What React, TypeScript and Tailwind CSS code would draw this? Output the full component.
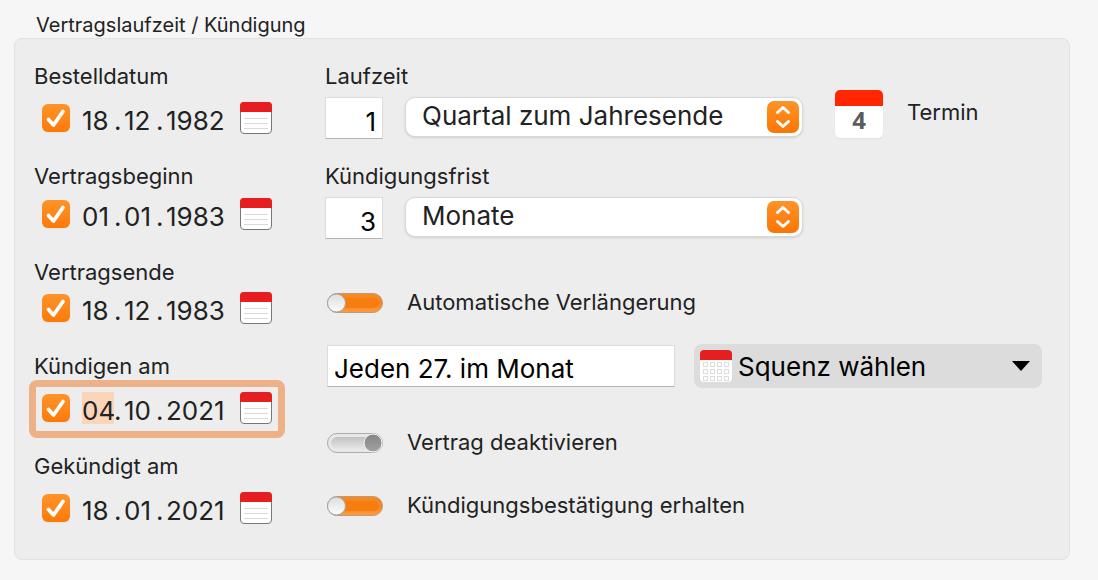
import { useState } from "react";
import clsx from "clsx";

interface DateEntry {
  id: string;
  label: string;
  day: string;
  month: string;
  year: string;
  gap: string;
  active?: boolean;
}

const dates: DateEntry[] = [
  { id: "order", label: "Bestelldatum", day: "18", month: "12", year: "1982", gap: "gap-1.5" },
  { id: "start", label: "Vertragsbeginn", day: "01", month: "01", year: "1983", gap: "gap-0.5" },
  { id: "end", label: "Vertragsende", day: "18", month: "12", year: "1983", gap: "gap-0" },
  { id: "cancel", label: "Kündigen am", day: "04", month: "10", year: "2021", gap: "gap-1.5", active: true },
  { id: "cancelled", label: "Gekündigt am", day: "18", month: "01", year: "2021", gap: "gap-1.5" },
];

function CalendarIcon() {
  return (
    <svg viewBox="0 0 32 32" className="size-8" aria-hidden="true">
      <rect x="0.5" y="0.5" width="31" height="31" rx="3.5" fill="#fff" stroke="#777" />
      <path d="M0 10V4a4 4 0 0 1 4-4h24a4 4 0 0 1 4 4v6z" fill="#e61e20" />
      <path d="M4 16.5h24M4 21.5h24M4 26.5h24" stroke="#d9d9de" />
    </svg>
  );
}

function MonthIcon() {
  return (
    <svg viewBox="0 0 32 32" className="size-8 shrink-0" aria-hidden="true">
      <rect width="32" height="32" rx="4" fill="#fff" />
      <path d="M0 10V4a4 4 0 0 1 4-4h24a4 4 0 0 1 4 4v6z" fill="#e61e20" />
      {[12.5, 19.5, 26.5].map((y) =>
        [3.5, 10.5, 17.5, 24.5].map((x) => (
          <rect key={`${x}-${y}`} x={x} y={y} width="4" height="4" fill="none" stroke="#dcdcdc" />
        ))
      )}
    </svg>
  );
}

function Checkbox({ label }: { label: string }) {
  const [checked, setChecked] = useState(true);

  return (
    <span className="relative size-7 shrink-0">
      <input
        type="checkbox"
        aria-label={label}
        checked={checked}
        onChange={() => setChecked(!checked)}
        className="block size-7 appearance-none rounded-md bg-white shadow-xs checked:bg-linear-to-b checked:from-[#ff9328] checked:to-[#fb7a05]"
      />
      {checked && (
        <svg viewBox="0 0 28 28" className="pointer-events-none absolute inset-0" aria-hidden="true">
          <path
            d="M6.5 15.500l5 5.500L21 7.500"
            fill="none"
            stroke="#fff"
            strokeWidth="3.800"
            strokeLinecap="round"
            strokeLinejoin="round"
          />
        </svg>
      )}
    </span>
  );
}

function DateField({ entry }: { entry: DateEntry }) {
  return (
    <div className={clsx("flex flex-col", entry.gap)}>
      <label htmlFor={entry.id} className="pl-[5px] text-[22px] leading-4">
        {entry.label}
      </label>
      <div
        className={clsx(
          "flex h-[58px] items-center rounded-lg border-[7px] pb-0.5 pl-1.5",
          entry.active ? "border-[#eeb086]" : "border-transparent"
        )}
      >
        <Checkbox label={`${entry.label} aktiv`} />
        <div className="ml-3 flex h-8 items-center text-[26px] leading-8">
          <input
            id={entry.id}
            defaultValue={entry.day}
            className={clsx("h-8 w-8 pt-1.5 outline-none", entry.active && "bg-[#fcd5b8]")}
          />
          <span className="w-2.5 pt-1.5">.</span>
          <input
            aria-label={`${entry.label} Monat`}
            defaultValue={entry.month}
            className="h-8 w-8 pt-1.5 outline-none"
          />
          <span className="w-2.5 pt-1.5">.</span>
          <input
            aria-label={`${entry.label} Jahr`}
            defaultValue={entry.year}
            className="h-8 w-[70px] pt-1.5 outline-none"
          />
        </div>
        <button type="button" aria-label={`${entry.label} im Kalender wählen`} className="ml-1">
          <CalendarIcon />
        </button>
      </div>
    </div>
  );
}

function Select({ id, options }: { id: string; options: string[] }) {
  return (
    <div className="relative h-10">
      <select
        id={id}
        aria-label="Einheit"
        className="block h-10 w-full appearance-none rounded-[10px] border border-[#d8d8d8] bg-white pb-0.5 pl-4 pr-12 text-[26px] leading-8 shadow-sm"
      >
        {options.map((option) => (
          <option key={option}>{option}</option>
        ))}
      </select>
      <svg
        viewBox="0 0 32 32"
        className="pointer-events-none absolute right-1 top-1 size-8"
        aria-hidden="true"
      >
        <defs>
          <linearGradient id={`${id}-fill`} x2="0" y2="1">
            <stop stopColor="#ff9328" />
            <stop offset="1" stopColor="#fb7503" />
          </linearGradient>
        </defs>
        <rect width="32" height="32" rx="7" fill={`url(#${id}-fill)`} />
        <path
          d="M10.500 11.500L16 6.500l5.500 5M10.500 20.500l5.500 5 5.500-5"
          fill="none"
          stroke="#fff"
          strokeWidth="3"
          strokeLinecap="round"
          strokeLinejoin="round"
        />
      </svg>
    </div>
  );
}

function Toggle({ label, on = false }: { label: string; on?: boolean }) {
  const [checked, setChecked] = useState(on);

  return (
    <label className="flex h-5 items-center gap-6 text-[22px] leading-5">
      <input
        type="checkbox"
        role="switch"
        checked={checked}
        onChange={() => setChecked(!checked)}
        className="peer sr-only"
      />
      <svg viewBox="0 0 56 20" className="h-5 w-14 shrink-0" aria-hidden="true">
        <defs>
          <linearGradient id="track-on" x2="0" y2="1">
            <stop stopColor="#f58a26" />
            <stop offset="0.5" stopColor="#f98318" />
            <stop offset="1" stopColor="#ff9b42" />
          </linearGradient>
          <linearGradient id="track-off" x2="0" y2="1">
            <stop stopColor="#c2c2c2" />
            <stop offset="1" stopColor="#e6e6e6" />
          </linearGradient>
          <linearGradient id="knob-on" x2="0" y2="1">
            <stop stopColor="#dedede" />
            <stop offset="1" stopColor="#fcfcfc" />
          </linearGradient>
          <linearGradient id="knob-off" x2="0" y2="1">
            <stop stopColor="#858585" />
            <stop offset="1" stopColor="#a2a2a2" />
          </linearGradient>
        </defs>
        {checked ? (
          <>
            <rect x="0.5" y="0.5" width="55" height="19" rx="9.500" fill="url(#track-on)" stroke="#b99b80" />
            <rect x="6" y="5" width="46" height="10" rx="5" fill="#f77d10" />
            <circle cx="9.500" cy="10" r="9" fill="url(#knob-on)" stroke="#a5a5a5" />
          </>
        ) : (
          <>
            <rect x="0.5" y="0.5" width="55" height="19" rx="9.500" fill="#e8e8e8" stroke="#ababab" />
            <rect x="4" y="4" width="48" height="12" rx="6" fill="url(#track-off)" />
            <circle cx="46" cy="10" r="9" fill="url(#knob-off)" stroke="#f5f5f5" />
          </>
        )}
      </svg>
      <span className="pb-0.5">{label}</span>
    </label>
  );
}

function DurationRow({ id, label, amount, options }: { id: string; label: string; amount: string; options: string[] }) {
  return (
    <div className="flex flex-col gap-[13px]">
      <label htmlFor={id} className="text-[22px] leading-4">
        {label}
      </label>
      <div className="grid grid-cols-[58px_1fr] gap-[22px]">
        <input
          id={id}
          defaultValue={amount}
          className="h-[42px] w-full border border-[#dcdcdc] border-b-[#b4b4b4] bg-white pr-1.5 pt-1.5 text-right text-[26px] leading-8 text-black"
        />
        <Select id={`${id}-unit`} options={options} />
      </div>
    </div>
  );
}

export default function App() {
  return (
    <main className="min-h-screen bg-[#f6f6f6] pb-5 pl-3.5 pr-7 font-['Inter','Liberation_Sans',sans-serif] text-[#222]">
      <h1 id="term" className="h-[38px] pl-[22px] pt-[13px] text-[20px] leading-6">
        Vertragslaufzeit / Kündigung
      </h1>
      <section
        aria-labelledby="term"
        className="flex gap-10 rounded-lg border border-[#e1e1e1] bg-[#ededed] pb-[21px] pl-3.5 pr-[27px] pt-[29px]"
      >
        <div className="flex w-64 shrink-0 flex-col gap-5">
          {dates.map((entry) => (
            <DateField key={entry.id} entry={entry} />
          ))}
        </div>

        <div className="flex min-w-0 flex-1 flex-col">
          <div className="flex gap-8">
            <div className="flex min-w-0 flex-1 flex-col gap-[29px]">
              <DurationRow
                id="duration"
                label="Laufzeit"
                amount="1"
                options={["Quartal zum Jahresende", "Monate", "Jahre"]}
              />
              <DurationRow id="notice" label="Kündigungsfrist" amount="3" options={["Monate", "Wochen", "Tage"]} />
            </div>
            <button type="button" className="mt-[22px] flex h-12 w-[207px] shrink-0 items-center gap-6 text-[22px] leading-6">
              <span className="flex size-12 flex-col overflow-hidden rounded-[5px] bg-white shadow-xs">
                <span className="h-4 bg-[#ff2600]" />
                <span className="text-center font-['Open_Sans',sans-serif] text-[24px] font-bold leading-7 text-[#5c5c5c]">
                  4
                </span>
              </span>
              <span className="pb-1">Termin</span>
            </button>
          </div>

          <div className="mt-[54px] flex flex-col pl-0.5">
            <Toggle label="Automatische Verlängerung" on />
            <div className="mt-[31px] grid grid-cols-2 items-center gap-[19px]">
              <input
                aria-label="Sequenz"
                defaultValue="Jeden 27. im Monat"
                className="h-[42px] w-full border border-[#dcdcdc] border-b-[#b4b4b4] bg-white pl-1.5 pt-1 text-[26px] leading-8 text-black"
              />
              <button
                type="button"
                aria-haspopup="menu"
                className="flex h-11 items-center gap-1.5 rounded-lg bg-[#dcdcdc] pl-1.5 pr-3 text-[26px] leading-8 text-black"
              >
                <MonthIcon />
                <span className="flex-1 pt-0.5 text-left">Squenz wählen</span>
                <svg viewBox="0 0 18 10" className="h-2.5 w-[18px]" aria-hidden="true">
                  <path d="M0 0h18L9 10z" />
                </svg>
              </button>
            </div>
            <div className="mt-[45px] flex flex-col gap-[43px]">
              <Toggle label="Vertrag deaktivieren" />
              <Toggle label="Kündigungsbestätigung erhalten" on />
            </div>
          </div>
        </div>
      </section>
    </main>
  );
}
